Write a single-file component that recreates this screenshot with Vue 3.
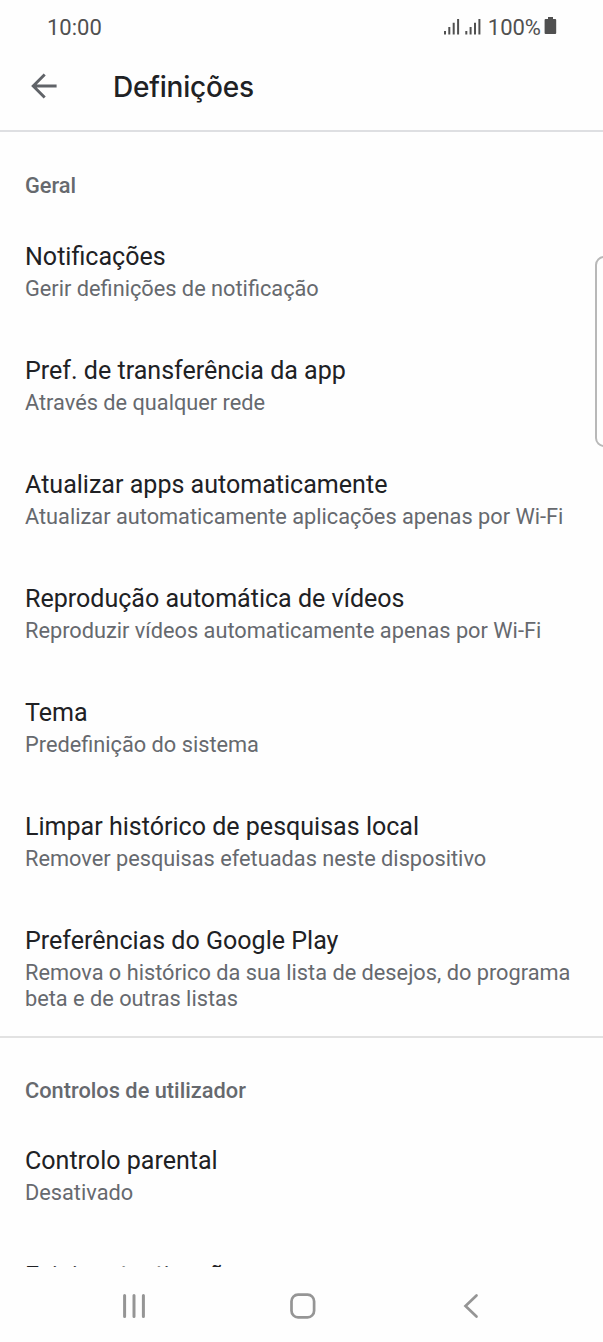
<script setup>
const general = [
  { title: 'Notificações', text: 'Gerir definições de notificação' },
  { title: 'Pref. de transferência da app', text: 'Através de qualquer rede' },
  { title: 'Atualizar apps automaticamente', text: 'Atualizar automaticamente aplicações apenas por Wi-Fi' },
  { title: 'Reprodução automática de vídeos', text: 'Reproduzir vídeos automaticamente apenas por Wi-Fi' },
  { title: 'Tema', text: 'Predefinição do sistema' },
  { title: 'Limpar histórico de pesquisas local', text: 'Remover pesquisas efetuadas neste dispositivo' },
  { title: 'Preferências do Google Play', text: 'Remova o histórico da sua lista de desejos, do programa beta e de outras listas' },
]
const controls = [
  { title: 'Controlo parental', text: 'Desativado' },
  { title: 'Exigir autenticação', text: '' },
]
</script>

<template>
  <div class="screen">
    <div class="status">
      <span class="clock">10:00</span>
      <svg class="signal" width="38" height="17" viewBox="0 0 38 17" fill="#505050">
        <path d="M0 13h2v3.5H0zM4.3 9h2v7.5h-2zM8.7 4.8h2v11.7h-2zM13.1 1h2v15.5h-2zM21.3 13h2v3.5h-2zM25.6 9h2v7.5h-2zM30 4.8h2v11.7h-2zM34.4 1h2v15.5h-2z" />
      </svg>
      <span class="percent">100%</span>
      <svg class="battery" width="13" height="19" viewBox="0 0 13 19">
        <path d="M4 1h5v2h2.2q1 0 1 1v13q0 1-1 1H1.6q-1 0-1-1V4q0-1 1-1H4z" fill="#505050" />
      </svg>
    </div>
    <header class="bar">
      <svg class="back" width="28" height="28" viewBox="0 0 28 28" fill="none" stroke="#606368" stroke-width="2.9">
        <path d="M26.6 14H3.6M14.7 2.4 3.2 14l11.5 11.6" />
      </svg>
      <h1>Definições</h1>
    </header>
    <main class="content">
      <section>
        <h2>Geral</h2>
        <div v-for="i in general" :key="i.title" class="item">
          <div class="title">{{ i.title }}</div>
          <div class="text">{{ i.text }}</div>
        </div>
      </section>
      <section class="second">
        <h2>Controlos de utilizador</h2>
        <div v-for="i in controls" :key="i.title" class="item">
          <div class="title">{{ i.title }}</div>
          <div class="text">{{ i.text }}</div>
        </div>
      </section>
      <div class="edge"></div>
    </main>
    <nav class="nav">
      <svg width="26" height="26" viewBox="0 0 26 26" stroke="#959595" stroke-width="3" stroke-linecap="round">
        <path d="M3.6 2.5v21M13 2.5v21M22.4 2.5v21" />
      </svg>
      <svg width="26" height="26" viewBox="0 0 26 26" fill="none" stroke="#959595" stroke-width="2.7">
        <rect x="1.5" y="1.7" width="22.6" height="22.6" rx="6.5" />
      </svg>
      <svg width="26" height="26" viewBox="0 0 26 26" fill="none" stroke="#959595" stroke-width="2.7" stroke-linecap="round">
        <path d="M18.5 2.5 7.5 13l11 10.5" />
      </svg>
    </nav>
  </div>
</template>

<style>
body { background: #fefefe; }
</style>

<style scoped>
.screen {
  display: flex;
  flex-direction: column;
  width: 603px;
  height: 1342px;
  overflow: hidden;
  background: #fefefe;
  font-family: Roboto, sans-serif;
  color: #202124;
}
.status {
  display: flex;
  align-items: center;
  height: 54px;
  padding: 0 46px 0 47px;
  box-sizing: border-box;
  font-size: 22px;
  color: #505050;
}
.signal { margin-left: auto; margin-right: 6px; margin-top: -1px; }
.percent { margin-right: 1px; }
.battery { margin-left: 2px; margin-top: -3px; }
.bar {
  display: flex;
  align-items: center;
  height: 78px;
  box-sizing: border-box;
  padding: 0 30px 12px;
  border-bottom: 2px solid #dedfe2;
}
.back { margin-right: 55px; }
h1 {
  margin: 2px 0 0;
  font-family: Inter, Roboto, sans-serif;
  font-size: 28px;
  line-height: 36px;
  font-weight: 500;
  letter-spacing: -0.2px;
}
.content {
  position: relative;
  height: 1135px;
  overflow: hidden;
}
h2 {
  margin: 0;
  padding: 41px 25px 42px;
  font-size: 21.8px;
  line-height: 26px;
  font-weight: 500;
  color: #66696e;
}
.item {
  padding: 0 25px;
  margin-bottom: 53px;
}
.title { font-size: 25.05px; line-height: 32px; margin-bottom: 3px; }
.text { font-size: 21.75px; line-height: 26px; color: #66696e; }
section .item:last-child { margin-bottom: 24px; }
.second { border-top: 2px solid #e2e2e2; }
.second h2 { padding-top: 40px; padding-bottom: 41px; }
.second .item { margin-bottom: 54px; }
.edge {
  position: absolute;
  top: 124px;
  right: -14px;
  width: 18px;
  height: 187px;
  border: 2px solid #b8b8b8;
  border-radius: 9px;
}
.nav {
  display: flex;
  justify-content: space-between;
  padding: 26px 119px 0 121px;
}
</style>
